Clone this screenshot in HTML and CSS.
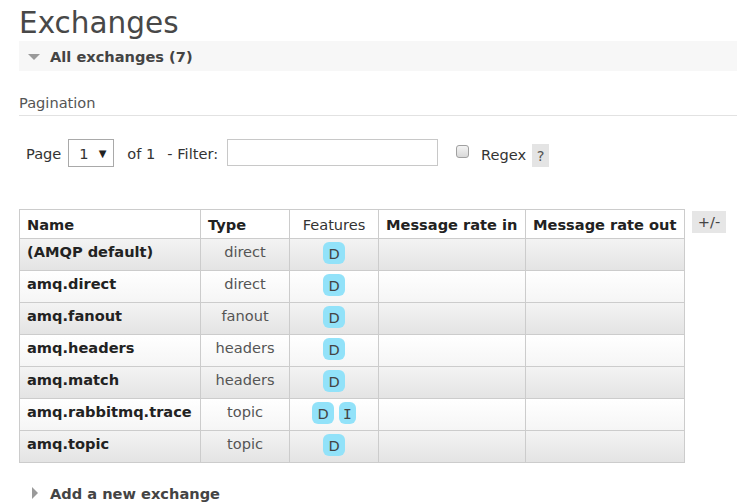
FILE: index.html
```html
<!DOCTYPE html>
<html>
<head>
<meta charset="utf-8">
<link rel="stylesheet" href="styles.css">
</head>
<body>
<h1 class="title">Exchanges</h1>
<div class="section-head">
  <span class="tri-down"></span>
  <span class="section-title">All exchanges (7)</span>
</div>
<div class="pagination-label">Pagination</div>
<div class="pager">
  <span class="lbl">Page</span>
  <span class="select"><span class="sel-val">1</span><span class="sel-arrow">▼</span></span>
  <span class="lbl of">of 1</span>
  <span class="lbl filter">- Filter:</span>
  <span class="textbox"></span>
  <span class="checkbox"></span>
  <span class="lbl regex">Regex</span>
  <span class="help">?</span>
</div>
<div class="table-wrap">
  <table class="list">
    <colgroup>
      <col class="c-name"><col class="c-type"><col class="c-feat"><col class="c-in"><col class="c-out">
    </colgroup>
    <thead>
      <tr>
        <th class="left">Name</th>
        <th class="left">Type</th>
        <th class="center normal">Features</th>
        <th class="left">Message rate in</th>
        <th class="left">Message rate out</th>
      </tr>
    </thead>
    <tbody>
      <tr class="alt1"><td class="name">(AMQP default)</td><td class="type">direct</td><td class="feat"><span class="badge">D</span></td><td></td><td></td></tr>
      <tr class="alt2"><td class="name">amq.direct</td><td class="type">direct</td><td class="feat"><span class="badge">D</span></td><td></td><td></td></tr>
      <tr class="alt1"><td class="name">amq.fanout</td><td class="type">fanout</td><td class="feat"><span class="badge">D</span></td><td></td><td></td></tr>
      <tr class="alt2"><td class="name">amq.headers</td><td class="type">headers</td><td class="feat"><span class="badge">D</span></td><td></td><td></td></tr>
      <tr class="alt1"><td class="name">amq.match</td><td class="type">headers</td><td class="feat"><span class="badge">D</span></td><td></td><td></td></tr>
      <tr class="alt2"><td class="name">amq.rabbitmq.trace</td><td class="type">topic</td><td class="feat"><span class="badge">D</span><span class="badge badge-i">I</span></td><td></td><td></td></tr>
      <tr class="alt1"><td class="name">amq.topic</td><td class="type">topic</td><td class="feat"><span class="badge">D</span></td><td></td><td></td></tr>
    </tbody>
  </table>
  <span class="plusminus">+/-</span>
</div>
<div class="section-foot">
  <span class="tri-right"></span>
  <span class="section-title">Add a new exchange</span>
</div>
</body>
</html>
```
FILE: styles.css
```css
html, body {
  margin: 0;
  padding: 0;
  background: #fff;
}
body {
  padding-left: 19px;
  font-family: "DejaVu Sans", Verdana, sans-serif;
  font-size: 14.6px;
  color: #333;
  overflow: hidden;
}
.title {
  margin: 6px 0 1px 0;
  font-size: 29.5px;
  line-height: 34px;
  font-weight: normal;
  color: #484848;
}
.section-head {
  height: 30px;
  background: #f7f7f7;
  display: flex;
  align-items: center;
  padding-left: 9px;
}
.tri-down {
  width: 0;
  height: 0;
  border-left: 6px solid transparent;
  border-right: 6px solid transparent;
  border-top: 6px solid #9a9a9a;
  margin-right: 10px;
  margin-top: 1px;
}
.section-title {
  font-weight: bold;
  color: #444;
}
.pagination-label {
  margin-top: 22px;
  line-height: 20px;
  padding-bottom: 2px;
  border-bottom: 1px solid #e2e2e2;
  color: #555;
}
.pager {
  display: flex;
  align-items: center;
  margin-top: 23px;
  padding-left: 7px;
  height: 28px;
}
.lbl {
  color: #333;
}
.select {
  display: flex;
  align-items: center;
  box-sizing: border-box;
  width: 46px;
  height: 28px;
  border: 1px solid #a9a9a9;
  margin-left: 7px;
  padding-left: 10px;
  background: #fff;
}
.sel-val {
  color: #333;
}
.sel-arrow {
  font-size: 10px;
  margin-left: 10px;
  color: #222;
}
.of {
  margin-left: 13px;
}
.filter {
  margin-left: 12px;
}
.textbox {
  box-sizing: border-box;
  width: 211px;
  height: 27px;
  border: 1px solid #c8c8c8;
  margin-left: 9px;
  margin-top: -1px;
  background: #fff;
}
.checkbox {
  box-sizing: border-box;
  width: 13px;
  height: 13px;
  border: 1px solid #a0a0a0;
  border-radius: 3px;
  background: linear-gradient(#f4f4f4, #d8d8d8);
  margin-left: 18px;
  margin-top: -3px;
}
.regex {
  margin-left: 12px;
  margin-top: 2px;
}
.help {
  display: inline-block;
  width: 17px;
  height: 23px;
  line-height: 23px;
  text-align: center;
  background: #e4e4e4;
  color: #555;
  margin-left: 6px;
  margin-top: 4px;
}
.table-wrap {
  display: flex;
  align-items: flex-start;
  margin-top: 42px;
}
table.list {
  border-collapse: collapse;
  table-layout: fixed;
  width: 665px;
}
col.c-name { width: 181px; }
col.c-type { width: 89px; }
col.c-feat { width: 89px; }
col.c-in { width: 147px; }
col.c-out { width: 159px; }
table.list th, table.list td {
  border: 1px solid #cccccc;
  padding: 0 7px;
  white-space: nowrap;
}
table.list th {
  height: 27px;
  background: #fff;
  color: #222;
  font-weight: bold;
  text-align: left;
  line-height: 27px;
  padding-top: 1px;
}
table.list th.center { text-align: center; }
table.list th.normal { font-weight: normal; color: #333; }
table.list tbody tr {
  height: 32px;
}
table.list td {
  vertical-align: top;
  padding-top: 2px;
  padding-bottom: 0;
  line-height: 22px;
}
tr.alt1 {
  background: linear-gradient(#f3f3f3, #e3e3e3);
}
tr.alt2 {
  background: linear-gradient(#ffffff, #f5f5f5);
}
td.name {
  font-weight: bold;
  color: #222;
}
td.type {
  text-align: center;
  color: #555;
}
table.list td.feat {
  text-align: center;
  padding-top: 3px;
  font-size: 0;
}
.badge {
  display: inline-block;
  vertical-align: top;
  font-size: 14.6px;
  height: 22px;
  line-height: 23px;
  min-width: 12px;
  padding: 0 5px;
  border-radius: 6px;
  background: #92e2f9;
  color: #444;
  margin: 0 2.5px;
}
.badge-i {
  font-family: "DejaVu Sans Mono", monospace;
  min-width: 8px;
  padding: 0 4px;
}
.plusminus {
  display: inline-block;
  margin-left: 7px;
  margin-top: 2px;
  width: 34px;
  height: 22px;
  line-height: 22px;
  text-align: center;
  background: #e6e6e6;
  color: #444;
}
.section-foot {
  display: flex;
  align-items: center;
  margin-top: 20px;
  padding-left: 13px;
  height: 20px;
}
.tri-right {
  width: 0;
  height: 0;
  border-top: 6px solid transparent;
  border-bottom: 6px solid transparent;
  border-left: 6px solid #9a9a9a;
  margin-right: 12px;
}
```
